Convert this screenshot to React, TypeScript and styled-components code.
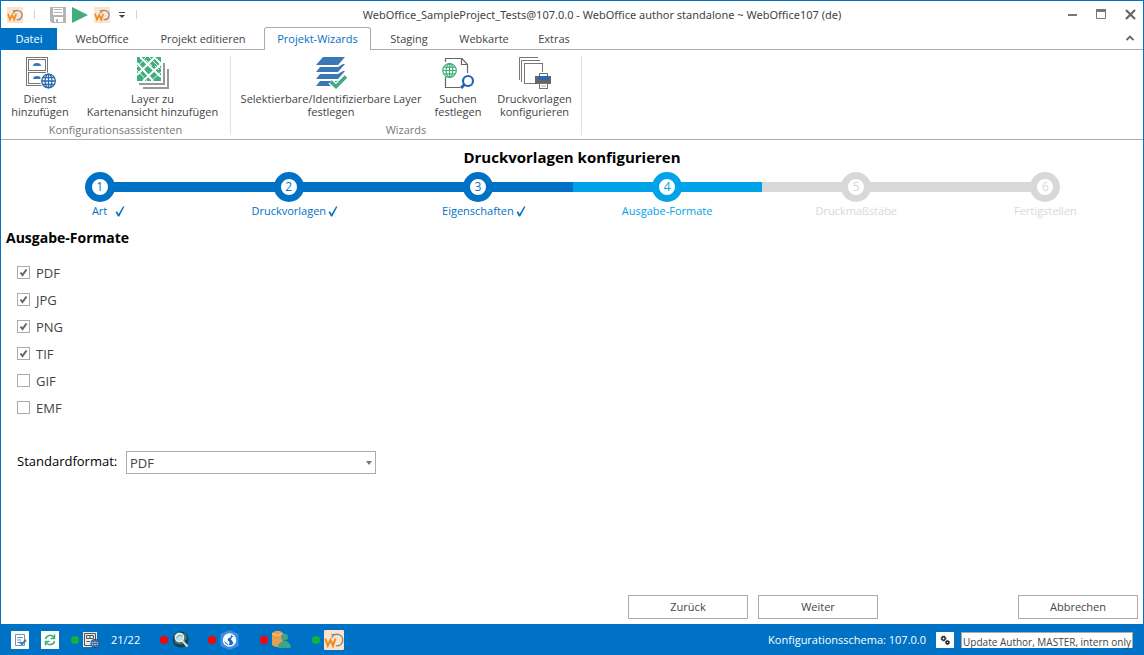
import React, { useState } from "react";
import styled, { createGlobalStyle, css } from "styled-components";

const blue = "#0072c6";
const lightBlue = "#00a2e8";
const mute = "#d8d8d8";
const line = "#ababab";
const ink = "#444444";

const GlobalStyle = createGlobalStyle`
  * { box-sizing: border-box; }
  body {
    margin: 0;
    background: #fff;
    color: ${ink};
    font-family: "Open Sans", "Noto Sans", sans-serif;
    font-size: 11px;
    line-height: 16px;
  }
  button, input, select { font: inherit; color: inherit; margin: 0; }
  button { cursor: pointer; }
  svg { display: block; flex: none; }
`;

const Window = styled.div`
  display: flex;
  flex-direction: column;
  min-height: 100vh;
  border: 1px solid ${blue};
  border-bottom: 0;
`;

/* ---------- title bar ---------- */

const TitleBar = styled.header`
  display: flex;
  align-items: center;
  height: 27px;
  padding: 0 7px 0 6px;
`;

const QuickAccess = styled.div`
  display: flex;
  align-items: center;
  gap: 6px;
`;

const Separator = styled.span<{ $before: number; $after: number }>`
  width: 1px;
  height: 9px;
  margin: 0 ${(p) => p.$after}px 0 ${(p) => p.$before}px;
  background: #d5d5d5;
`;

const PlainButton = styled.button`
  display: flex;
  align-items: center;
  justify-content: center;
  padding: 0;
  border: 0;
  background: none;
`;

const WindowTitle = styled.h1`
  flex: 1;
  margin: 0;
  font-family: "Noto Sans", "Open Sans", sans-serif;
  font-size: 11px;
  font-weight: 400;
  text-align: center;
  white-space: nowrap;
`;

const WindowButtons = styled.div`
  display: flex;
  align-items: center;
  gap: 18px;
`;

/* ---------- ribbon ---------- */

const TabBar = styled.nav`
  display: flex;
  height: 22px;
  border-bottom: 1px solid ${line};
`;

const Tab = styled.button<{ $width: number; $kind?: "file" | "active" }>`
  width: ${(p) => p.$width}px;
  height: 21px;
  padding: 0;
  border: 0;
  background: none;
  white-space: nowrap;
  ${(p) =>
    p.$kind === "file" &&
    css`
      height: 22px;
      margin-right: 2px;
      background: ${blue};
      color: #fff;
    `}
  ${(p) =>
    p.$kind === "active" &&
    css`
      height: 23px;
      margin: -1px 3px 0;
      border: 1px solid ${line};
      border-bottom: 0;
      border-radius: 3px 3px 0 0;
      background: #fff;
      color: ${blue};
    `}
`;

const Collapse = styled(PlainButton)`
  width: 16px;
  height: 20px;
  margin: 0 5px 0 auto;
`;

const Ribbon = styled.div`
  display: flex;
  height: 90px;
  padding-top: 6px;
  border-bottom: 1px solid ${line};
`;

const Group = styled.section<{ $width: number }>`
  display: flex;
  flex-direction: column;
  width: ${(p) => p.$width}px;
  height: 79px;
  border-right: 1px solid #e1e1e1;
`;

const GroupItems = styled.div`
  display: flex;
  gap: 2px;
  padding-left: 3px;
`;

const GroupLabel = styled.div`
  margin-top: 4px;
  color: #777;
  text-align: center;
`;

const RibbonButton = styled.button<{ $width: number }>`
  display: flex;
  flex-direction: column;
  align-items: center;
  gap: 3px;
  width: ${(p) => p.$width}px;
  padding: 0;
  border: 0;
  background: none;
  line-height: 13px;
  white-space: pre;
`;

/* ---------- wizard ---------- */

const Main = styled.main`
  display: flex;
  flex: 1;
  flex-direction: column;
`;

const WizardTitle = styled.h2`
  margin: 7px 0 5px;
  font-size: 15px;
  line-height: 20px;
  font-weight: 700;
  color: #000;
  text-align: center;
`;

const Steps = styled.ol`
  display: grid;
  grid-template-columns: repeat(6, 1fr);
  margin: 0;
  padding: 0 3px 0 4px;
  list-style: none;
`;

const Step = styled.li<{ $color: string }>`
  display: flex;
  flex-direction: column;
  align-items: center;
  color: ${(p) => p.$color};
`;

const Track = styled.div`
  display: flex;
  align-items: center;
  align-self: stretch;
`;

const Bar = styled.span<{ $hidden?: boolean }>`
  flex: 1;
  height: 10px;
  background: ${(p) => (p.$hidden ? "transparent" : "currentColor")};
`;

const Circle = styled.span`
  display: flex;
  align-items: center;
  justify-content: center;
  z-index: 1;
  width: 30px;
  height: 30px;
  margin: 0 -3px;
  border: 7px solid currentColor;
  border-radius: 50%;
  background: #fff;
  font-size: 12px;
`;

const StepLabel = styled.span<{ $gap: number }>`
  display: flex;
  align-items: center;
  gap: ${(p) => p.$gap}px;
  margin-top: 1px;
  padding-left: ${(p) => (p.$gap ? p.$gap + 10 : 0)}px;
  white-space: nowrap;
`;

const SectionTitle = styled.h3`
  margin: 9px 5px 11px;
  font-size: 14px;
  line-height: 20px;
  font-weight: 700;
  color: #000;
`;

const Options = styled.div`
  display: flex;
  flex-direction: column;
  align-items: flex-start;
  padding-left: 16px;
`;

const Option = styled.label`
  display: flex;
  align-items: center;
  gap: 6px;
  height: 27px;
  font-size: 13px;
`;

const BoxWrap = styled.span`
  display: grid;
  width: 13px;
  height: 13px;
  > * { grid-area: 1 / 1; }
  svg { pointer-events: none; }
`;

const Box = styled.input`
  appearance: none;
  width: 13px;
  height: 13px;
  border: 1px solid ${line};
  background: #fff;
`;

const FormatRow = styled.div`
  display: flex;
  gap: 10px;
  margin: 30px 0 0 16px;
`;

const FormatLabel = styled.label`
  width: 99px;
  font-size: 13px;
  line-height: 20px;
  color: #000;
  white-space: nowrap;
`;

const SelectWrap = styled.span`
  display: grid;
  align-items: center;
  width: 250px;
  > * { grid-area: 1 / 1; }
  svg { justify-self: end; margin-right: 4px; pointer-events: none; }
`;

const Select = styled.select`
  appearance: none;
  width: 100%;
  height: 23px;
  padding: 0 3px;
  border: 1px solid ${line};
  border-radius: 0;
  background: #fff;
  font-size: 13px;
`;

const Actions = styled.div`
  display: flex;
  gap: 10px;
  margin-top: auto;
  padding: 20px 5px 5px;
  justify-content: flex-end;
`;

const ActionButton = styled.button<{ $apart?: boolean }>`
  width: 120px;
  height: 24px;
  padding: 0;
  margin-left: ${(p) => (p.$apart ? 130 : 0)}px;
  border: 1px solid ${line};
  background: #fff;
`;

/* ---------- status bar ---------- */

const StatusBar = styled.footer`
  display: flex;
  align-items: center;
  height: 31px;
  padding: 0 10px;
  background: ${blue};
  color: #fff;
  white-space: nowrap;
`;

const Tool = styled(PlainButton)`
  width: 18px;
  height: 18px;
  margin-right: 12px;
  background: #fff;
`;

const Status = styled.span<{ $width: number }>`
  display: flex;
  align-items: center;
  gap: 4px;
  width: ${(p) => p.$width}px;
`;

const Dot = styled.i<{ $on?: boolean }>`
  width: 8px;
  height: 8px;
  border-radius: 50%;
  background: ${(p) => (p.$on ? "#0fb43c" : "#ff0000")};
`;

const Count = styled.span`
  margin-left: 7px;
`;

const Schema = styled.span`
  margin-left: auto;
`;

const Gears = styled(PlainButton)`
  width: 18px;
  height: 16px;
  margin: 0 7px 0 10px;
  background: #fff;
`;

const UpdateNote = styled.button`
  display: flex;
  justify-content: center;
  align-items: flex-start;
  width: 172px;
  height: 16px;
  padding: 3px 0 0;
  border: 1px solid ${line};
  border-bottom: 0;
  background: #fff;
  color: ${ink};
  font-size: 10px;
  line-height: 12px;
`;

/* ---------- drawings ---------- */

const Logo = ({ size }: { size: number }) => (
  <svg width={size} height={size} viewBox="0 0 16 16" aria-hidden="true">
    <rect width="16" height="16" rx="1" fill="#fde3cd" />
    <path d="M6.2 6.200A4.600 4.600 0 1 1 9.600 12.600" fill="none" stroke="#8e8a86" strokeWidth="1.200" />
    <path d="M5.800 3.600H11" fill="none" stroke="#8e8a86" strokeWidth="0.900" />
    <path d="M1 6.800L3 12.600L5.200 8L7.200 12.600L9.200 6.800" fill="none" stroke="#ef8d22" strokeWidth="1.700" />
  </svg>
);

const SaveIcon = () => (
  <svg width="16" height="16" viewBox="0 0 16 16" aria-hidden="true">
    <path d="M0 0H16V16H2L0 14Z" fill="#b4b4b4" />
    <path d="M3 0H13V8H3Z" fill="#fff" />
    <path d="M4 10H13V15H8V12H6V15H4Z" fill="#fff" />
    <path d="M4 2.500H12M4 5.500H12" stroke="#b4b4b4" />
    <path d="M3 0.500H13" stroke="#b4b4b4" />
  </svg>
);

type GlobeProps = { cx: number; cy: number; r: number; color: string; width?: number };

const GlobeLines = ({ cx, cy, r, color, width = 1.3 }: GlobeProps) => (
  <g fill="none" stroke={color} strokeWidth={width}>
    <circle cx={cx} cy={cy} r={r} fill="#fff" />
    <ellipse cx={cx} cy={cy} rx={r / 2} ry={r} />
    <path
      d={`M${cx} ${cy - r}V${cy + r}M${cx - r} ${cy}H${cx + r}M${cx - r * 0.85} ${cy - r / 2}H${cx + r * 0.85}M${cx - r * 0.85} ${cy + r / 2}H${cx + r * 0.85}`}
    />
  </g>
);

const ServiceIcon = () => (
  <svg width="32" height="33" viewBox="0 0 32 33" aria-hidden="true">
    <g fill="#fff" stroke="#777">
      <rect x="2.500" y="1.500" width="21" height="28" />
      <rect x="4.500" y="3.500" width="17" height="11" />
      <rect x="4.500" y="16.500" width="17" height="11" />
    </g>
    <path d="M9 10Q9 7 13 7T17 10ZM9 23Q9 20 13 20T17 23Z" fill="#3c77b5" />
    <circle cx="24.500" cy="25" r="8.500" fill="#fff" />
    <GlobeLines cx={24.500} cy={25} r={6.800} color="#2a69ac" />
  </svg>
);

const LayerIcon = () => (
  <svg width="32" height="33" viewBox="0 0 32 33" aria-hidden="true">
    <path d="M26 7H28V29H2V27H26ZM30 13H32V33H6V31H30Z" fill="#999" />
    <rect y="1" width="24" height="24" fill="#3fae7d" />
    <path d="M0 7L16 25M3 1L24 21M17 1L24 8M0 19L18 1M6 25L24 8" stroke="#fff" strokeWidth="2" />
    <path d="M12 1L24 13M0 11L9 1M14 25L24 16M0 14L10 25M9 4L15 10M18 10L22 14" stroke="#fff" strokeWidth="0.900" />
  </svg>
);

const SelectableIcon = () => (
  <svg width="32" height="33" viewBox="0 0 32 33" aria-hidden="true">
    <g fill="#3c77b5">
      <path d="M8 1H30L23 9H1Z" />
      <path d="M5 11L1 16H23L30 8H28L23 11Z" />
      <path d="M5 18L1 23H23L30 15H28L23 18Z" />
      <path d="M5 25L1 30H18L30 22H26L22 25Z" />
    </g>
    <path d="M15.500 25.500L21 30.500L31 20.500" fill="none" stroke="#fff" strokeWidth="6" />
    <path d="M15.500 25.500L21 30.500L31 20.500" fill="none" stroke="#43a982" strokeWidth="3.500" />
  </svg>
);

const SearchIcon = () => (
  <svg width="34" height="33" viewBox="0 0 34 33" aria-hidden="true">
    <path d="M4.500 6V2.500H21L26.500 8.500V17M20.500 2.500V8.500H26.500M4.500 21V31.500H19" fill="none" stroke="#666" strokeWidth="1.200" />
    <GlobeLines cx={8.500} cy={14.500} r={6.800} color="#3fae7d" width={1.200} />
    <circle cx="27" cy="25" r="5" fill="#fff" stroke="#1f67b3" strokeWidth="2.200" />
    <path d="M23.500 28.500L20 32" stroke="#1f67b3" strokeWidth="3" />
  </svg>
);

const PrintIcon = () => (
  <svg width="34" height="33" viewBox="0 0 34 33" aria-hidden="true">
    <g fill="#fff" stroke="#777">
      <path d="M1.500 24V1.500H20" />
      <path d="M3.500 26V4.500H22" />
      <rect x="6.500" y="7.500" width="18" height="20" />
    </g>
    <rect x="17" y="16" width="17" height="17" fill="#fff" />
    <path d="M17 20H20V24H31V20H33V28H17Z" fill="#666" />
    <path d="M21.500 23V17.500H29.500V23" fill="#fff" stroke="#666" />
    <rect x="20" y="20" width="11" height="4" fill="#2a69ac" />
    <rect x="21.500" y="27.500" width="8" height="5" fill="#fff" stroke="#777" />
    <path d="M23 30H28" stroke="#8ab4dc" />
  </svg>
);

const Check = () => (
  <svg width="10" height="11" viewBox="0 0 10 11" aria-hidden="true">
    <path d="M0.500 6L2 5.200L3.600 8L8 0.500H9.500L4.200 10.500H3Z" fill="currentColor" />
  </svg>
);

const CatalogIcon = () => (
  <svg width="17" height="16" viewBox="0 0 17 16" aria-hidden="true">
    <path d="M0 0H14V15H0Z" fill="#e9e9e9" />
    <path d="M1.500 1.500H12.500V13.500H1.500ZM3.500 3.500H10.500V6.500H3.500ZM3.500 9.500H7M6 5H8" fill="none" stroke="#555" />
    <circle cx="12" cy="11.500" r="4.500" fill="#1b4f87" />
    <GlobeLines cx={12} cy={11.500} r={3.600} color="#1b4f87" width={0.700} />
  </svg>
);

const MagnifierIcon = () => (
  <svg width="17" height="17" viewBox="0 0 17 17" aria-hidden="true">
    <circle cx="8.500" cy="8.500" r="8" fill="#173f52" />
    <path d="M2 4L6 1L14 3L15 8L9 14L3 12Z" fill="#3f7a6a" />
    <circle cx="7.500" cy="6.500" r="4.200" fill="#bfe0e8" stroke="#e8f2f4" strokeWidth="1.200" />
    <path d="M4.500 7Q7 3 10.500 5" fill="none" stroke="#5f9fb0" />
    <path d="M10.500 10L15.500 15.500" stroke="#d8dcc0" strokeWidth="2.200" />
  </svg>
);

const HexGlobeIcon = () => (
  <svg width="19" height="20" viewBox="0 0 19 20" aria-hidden="true">
    <path d="M9.500 0L18.500 4V16L9.500 20L0.500 16V4Z" fill="#3b8ee6" />
    <circle cx="9.500" cy="10" r="6" fill="#1769c9" stroke="#fff" strokeWidth="1.500" />
    <path d="M4.500 7L8 4L11 5L10.500 7.500L8.500 8L7.500 10L9.500 12L9 15.500L6.500 13L4 10.500Z" fill="#fff" />
    <path d="M12 7L15 6.500V12L13 13.500L12.500 11L11 9.500Z" fill="#fff" />
  </svg>
);

const DatabaseIcon = () => (
  <svg width="19" height="19" viewBox="0 0 19 19" aria-hidden="true">
    <path d="M0 3Q6 -1.500 11 3V15Q5 19 0 15Z" fill="#e5a04e" />
    <path d="M0 3.500Q6 7 11 3.500" fill="none" stroke="#f6cf98" />
    <circle cx="12.500" cy="7" r="3.500" fill="#3fa585" />
    <path d="M6 18V15L9 12L11 11H14L16 12L18.500 15V18Z" fill="#3fa585" />
  </svg>
);

const gearAt = (cx: number, cy: number, r: number) => (
  <g fill="none" stroke="#222">
    <circle cx={cx} cy={cy} r={r + 0.8} strokeWidth="1" strokeDasharray="1 1" />
    <circle cx={cx} cy={cy} r={r} strokeWidth="1.400" />
  </g>
);

/* ---------- content ---------- */

type StepInfo = { label: string; color: string; done?: boolean; gap?: number };

const steps: StepInfo[] = [
  { label: "Art", color: blue, done: true, gap: 8 },
  { label: "Druckvorlagen", color: blue, done: true, gap: 2 },
  { label: "Eigenschaften", color: blue, done: true, gap: 2 },
  { label: "Ausgabe-Formate", color: lightBlue },
  { label: "Druckmaßstäbe", color: mute },
  { label: "Fertigstellen", color: mute },
];

const formats = ["PDF", "JPG", "PNG", "TIF", "GIF", "EMF"];

export default function App() {
  const [chosen, setChosen] = useState<string[]>(["PDF", "JPG", "PNG", "TIF"]);
  const toggle = (f: string) =>
    setChosen((c) => (c.includes(f) ? c.filter((x) => x !== f) : [...c, f]));

  return (
    <>
      <GlobalStyle />
      <Window>
        <TitleBar>
          <QuickAccess>
            <Logo size={16} />
            <Separator $before={5} $after={9} />
            <PlainButton aria-label="Speichern"><SaveIcon /></PlainButton>
            <PlainButton aria-label="Starten">
              <svg width="16" height="16" viewBox="0 0 16 16" aria-hidden="true">
                <path d="M0 0L16 8L0 16Z" fill="#3fae7d" />
              </svg>
            </PlainButton>
            <PlainButton aria-label="WebOffice"><Logo size={16} /></PlainButton>
            <PlainButton aria-label="Schnellzugriff anpassen">
              <svg width="12" height="8" viewBox="0 0 12 8" aria-hidden="true">
                <path d="M3 1.500H9" stroke={ink} />
                <path d="M3 4H9L6 7Z" fill={ink} />
              </svg>
            </PlainButton>
            <Separator $before={2} $after={0} />
          </QuickAccess>
          <WindowTitle>
            WebOffice_SampleProject_Tests@107.0.0 - WebOffice author standalone ~ WebOffice107 (de)
          </WindowTitle>
          <WindowButtons>
            <PlainButton aria-label="Minimieren">
              <svg width="11" height="11" aria-hidden="true"><path d="M1 6H10" stroke="#777" strokeWidth="2" /></svg>
            </PlainButton>
            <PlainButton aria-label="Maximieren">
              <svg width="11" height="11" aria-hidden="true">
                <path d="M0.500 1.500H9.500V9.500H0.500Z" fill="none" stroke="#777" />
                <path d="M0 1.500H10" stroke="#777" strokeWidth="3" />
              </svg>
            </PlainButton>
            <PlainButton aria-label="Schließen">
              <svg width="11" height="11" aria-hidden="true"><path d="M1 1L10 10M10 1L1 10" stroke="#666" strokeWidth="2.200" /></svg>
            </PlainButton>
          </WindowButtons>
        </TitleBar>

        <TabBar>
          <Tab $width={56} $kind="file">Datei</Tab>
          <Tab $width={86}>WebOffice</Tab>
          <Tab $width={116}>Projekt editieren</Tab>
          <Tab $width={107} $kind="active">Projekt-Wizards</Tab>
          <Tab $width={70}>Staging</Tab>
          <Tab $width={80}>Webkarte</Tab>
          <Tab $width={60}>Extras</Tab>
          <Collapse aria-label="Menüband reduzieren">
            <svg width="8" height="6" aria-hidden="true"><path d="M0.500 5L4 1.500L7.500 5" fill="none" stroke="#666" strokeWidth="1.800" /></svg>
          </Collapse>
        </TabBar>

        <Ribbon>
          <Group $width={230}>
            <GroupItems>
              <RibbonButton $width={72}><ServiceIcon />{"Dienst\nhinzufügen"}</RibbonButton>
              <RibbonButton $width={149}><LayerIcon />{"Layer zu\nKartenansicht hinzufügen"}</RibbonButton>
            </GroupItems>
            <GroupLabel>Konfigurationsassistenten</GroupLabel>
          </Group>
          <Group $width={351}>
            <GroupItems>
              <RibbonButton $width={194}><SelectableIcon />{"Selektierbare/Identifizierbare Layer\nfestlegen"}</RibbonButton>
              <RibbonButton $width={56}><SearchIcon />{"Suchen\nfestlegen"}</RibbonButton>
              <RibbonButton $width={93}><PrintIcon />{"Druckvorlagen\nkonfigurieren"}</RibbonButton>
            </GroupItems>
            <GroupLabel>Wizards</GroupLabel>
          </Group>
        </Ribbon>

        <Main>
          <WizardTitle>Druckvorlagen konfigurieren</WizardTitle>
          <Steps>
            {steps.map((s, i) => (
              <Step key={s.label} $color={s.color}>
                <Track>
                  <Bar $hidden={i === 0} />
                  <Circle>{i + 1}</Circle>
                  <Bar $hidden={i === steps.length - 1} />
                </Track>
                <StepLabel $gap={s.gap ?? 0}>
                  {s.label}
                  {s.done && <Check />}
                </StepLabel>
              </Step>
            ))}
          </Steps>

          <SectionTitle>Ausgabe-Formate</SectionTitle>
          <Options>
            {formats.map((f) => (
              <Option key={f}>
                <BoxWrap>
                  <Box type="checkbox" checked={chosen.includes(f)} onChange={() => toggle(f)} />
                  {chosen.includes(f) && (
                    <svg width="13" height="13" aria-hidden="true">
                      <path d="M3.500 6.500L5.500 9L9.500 3.500" fill="none" stroke="#666" strokeWidth="2" />
                    </svg>
                  )}
                </BoxWrap>
                {f}
              </Option>
            ))}
          </Options>
          <FormatRow>
            <FormatLabel htmlFor="standard">Standardformat:</FormatLabel>
            <SelectWrap>
              <Select id="standard" defaultValue="PDF">
                {formats.map((f) => <option key={f}>{f}</option>)}
              </Select>
              <svg width="6" height="4" aria-hidden="true"><path d="M0 0H6L3 4Z" fill="#777" /></svg>
            </SelectWrap>
          </FormatRow>

          <Actions>
            <ActionButton>Zurück</ActionButton>
            <ActionButton>Weiter</ActionButton>
            <ActionButton $apart>Abbrechen</ActionButton>
          </Actions>
        </Main>

        <StatusBar>
          <Tool aria-label="Projekt prüfen">
            <svg width="14" height="14" aria-hidden="true">
              <path d="M2.500 1.500H11.500V12.500H2.500ZM4 4.500H10M4 7H8M4 9.500H7" fill="none" stroke="#6f95b8" />
              <path d="M7 9L9 11L13 7" fill="none" stroke="#3c77b5" strokeWidth="2" />
            </svg>
          </Tool>
          <Tool aria-label="Aktualisieren">
            <svg width="12" height="12" aria-hidden="true">
              <path d="M1.500 5A4.500 4.500 0 0 1 10 4M10.500 7A4.500 4.500 0 0 1 2 8M10.500 0.500V4.500H6.500M1.500 11.500V7.500H5.500" fill="none" stroke="#3fae7d" strokeWidth="1.500" />
            </svg>
          </Tool>
          <Status $width={89}><Dot $on /><CatalogIcon /><Count>21/22</Count></Status>
          <Status $width={48}><Dot /><MagnifierIcon /></Status>
          <Status $width={52}><Dot /><HexGlobeIcon /></Status>
          <Status $width={52}><Dot /><DatabaseIcon /></Status>
          <Status $width={40}><Dot $on /><Logo size={20} /></Status>
          <Schema>Konfigurationsschema: 107.0.0</Schema>
          <Gears aria-label="Einstellungen">
            <svg width="12" height="12" aria-hidden="true">
              {gearAt(4.5, 4.5, 1.7)}
              {gearAt(8.5, 8.5, 1.3)}
            </svg>
          </Gears>
          <UpdateNote>Update Author, MASTER, intern only</UpdateNote>
        </StatusBar>
      </Window>
    </>
  );
}
